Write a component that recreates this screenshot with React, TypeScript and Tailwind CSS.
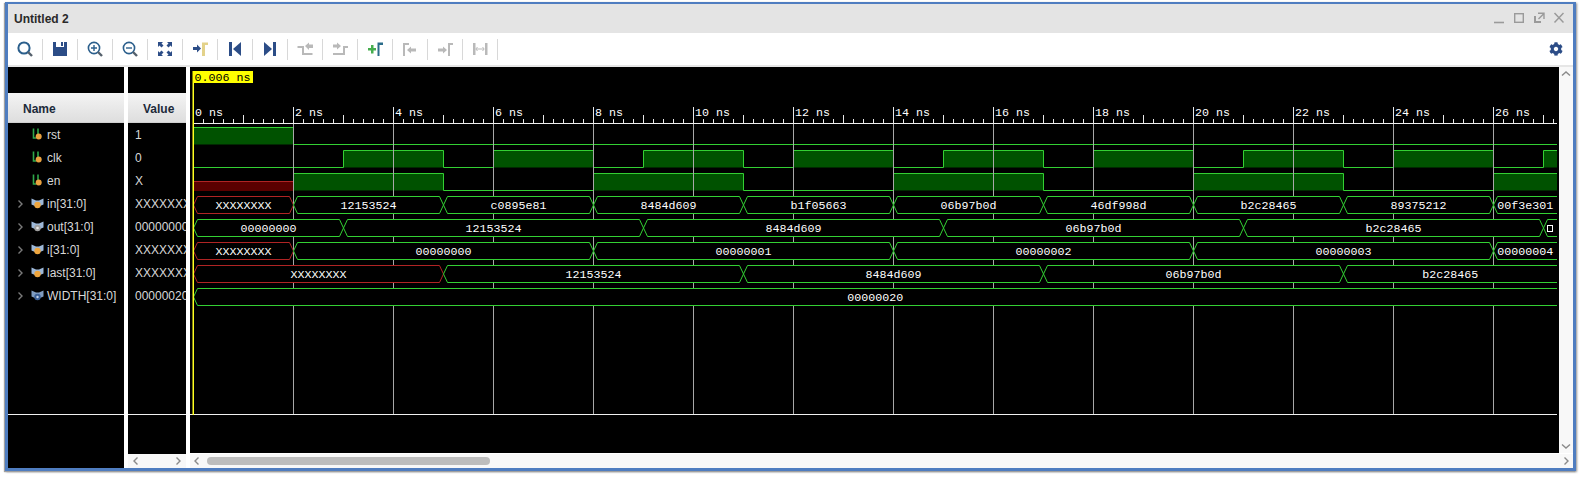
import React from "react";
import { FaCog } from "react-icons/fa";

const X = (t: number) => 193.5 + 50 * t;
const END = 1557;
const GREEN = "#33d033";
const FILL = "#005200";
const RED = "#b02424";
const RFILL = "#5a0000";
const NAVY = "#2c4d87";
const GRAY = "#b9b9b9";
const MONO = { fontFamily: '"Liberation Mono", monospace' };

type Seg = [number, number, string];

const inSegs: Seg[] = [[0, 2, "XXXXXXXX"], [2, 5, "12153524"], [5, 8, "c0895e81"], [8, 11, "8484d609"], [11, 14, "b1f05663"], [14, 17, "06b97b0d"], [17, 20, "46df998d"], [20, 23, "b2c28465"], [23, 26, "89375212"], [26, 99, "00f3e301"]];
const outSegs: Seg[] = [[0, 3, "00000000"], [3, 9, "12153524"], [9, 15, "8484d609"], [15, 21, "06b97b0d"], [21, 27, "b2c28465"], [27, 99, ""]];
const iSegs: Seg[] = [[0, 2, "XXXXXXXX"], [2, 8, "00000000"], [8, 14, "00000001"], [14, 20, "00000002"], [20, 26, "00000003"], [26, 99, "00000004"]];
const lastSegs: Seg[] = [[0, 5, "XXXXXXXX"], [5, 11, "12153524"], [11, 17, "8484d609"], [17, 23, "06b97b0d"], [23, 99, "b2c28465"]];
const widthSegs: Seg[] = [[0, 99, "00000020"]];

function Bus({ top, segs }: { top: number; segs: Seg[] }) {
  const t = top + 0.5;
  const b = top + 17.5;
  const m = top + 9;
  return (
    <g>
      {segs.map(([a, e, label]) => {
        const x0 = X(a);
        const open = X(e) > END;
        const x1 = open ? END : X(e);
        const c = label === "XXXXXXXX" ? RED : GREEN;
        const pts = open
          ? `${END},${t} ${x0 + 4},${t} ${x0},${m} ${x0 + 4},${b} ${END},${b}`
          : `${x0},${m} ${x0 + 4},${t} ${x1 - 4},${t} ${x1},${m} ${x1 - 4},${b} ${x0 + 4},${b} ${x0},${m}`;
        return (
          <g key={a}>
            <polyline points={pts} fill="#000" stroke={c} strokeWidth="1" />
            {label ? (
              <text x={(x0 + x1) / 2} y={m + 4} textAnchor="middle" fill="#fff" fontSize="11.67" style={MONO}>
                {label}
              </text>
            ) : (
              <rect x={1547.5} y={top + 6.5} width="5" height="6" fill="none" stroke="#fff" strokeWidth="1" />
            )}
          </g>
        );
      })}
    </g>
  );
}

function Bit({ top, highs, redUntil }: { top: number; highs: [number, number][]; redUntil?: number }) {
  const hi = top + 0.5;
  const lo = top + 17.5;
  const begin = redUntil ?? 0;
  const pts: string[] = [];
  let level = highs[0][0] === begin ? "hi" : "lo";
  pts.push(`${X(begin)},${level === "hi" ? hi : lo}`);
  highs.forEach(([a, b]) => {
    if (a > begin) pts.push(`${X(a)},${lo}`);
    pts.push(`${X(a)},${hi}`);
    if (X(b) < END) {
      pts.push(`${X(b)},${hi}`, `${X(b)},${lo}`);
      level = "lo";
    } else {
      pts.push(`${END},${hi}`);
      level = "hi";
    }
  });
  if (level === "lo") pts.push(`${END},${lo}`);
  return (
    <g>
      {redUntil ? (
        <>
          <rect x={X(0)} y={top + 8} width={X(redUntil) - X(0)} height={10} fill={RFILL} />
          <line x1={X(0)} x2={X(redUntil)} y1={top + 8.5} y2={top + 8.5} stroke={RED} />
        </>
      ) : null}
      {highs.map(([a, b]) => (
        <rect key={a} x={X(a)} y={hi} width={Math.min(X(b), END) - X(a)} height={17} fill={FILL} />
      ))}
      <polyline points={pts.join(" ")} fill="none" stroke={GREEN} strokeWidth="1" />
    </g>
  );
}

function Waves() {
  const ticks: React.ReactNode[] = [];
  for (let i = 0; i <= 136; i++) {
    const x = 193.5 + i * 10;
    if (x > END) break;
    const major = i % 10 === 0;
    const mid = i % 5 === 0;
    ticks.push(<line key={i} x1={x} x2={x} y1={major ? 107 : mid ? 115 : 119} y2={123} stroke="#e8e8e8" />);
  }
  const labels: React.ReactNode[] = [];
  const grid: React.ReactNode[] = [];
  for (let t = 0; t <= 26; t += 2) {
    labels.push(
      <text key={t} x={X(t) + 1.5} y={116} fill="#fff" fontSize="11.67" style={MONO}>
        {t} ns
      </text>
    );
    if (t > 0) grid.push(<line key={t} x1={X(t)} x2={X(t)} y1={123} y2={414} stroke="#a8a8a8" />);
  }
  const clk: [number, number][] = [3, 6, 9, 12, 15, 18, 21, 24, 27].map((a) => [a, a + 2]);
  const en: [number, number][] = [2, 8, 14, 20, 26].map((a) => [a, a + 3]);
  return (
    <svg viewBox="190 67 1369 386" width="1369" height="386" className="block bg-black">
      <Bit top={127} highs={[[0, 2]]} />
      <Bit top={150} highs={clk} />
      <Bit top={173} highs={en} redUntil={2} />
      {grid}
      {ticks}
      {labels}
      <line x1={193} x2={END} y1={123.5} y2={123.5} stroke="#f0f0f0" />
      <Bus top={196} segs={inSegs} />
      <Bus top={219} segs={outSegs} />
      <Bus top={242} segs={iSegs} />
      <Bus top={265} segs={lastSegs} />
      <Bus top={288} segs={widthSegs} />
      <line x1={190} x2={END} y1={414.5} y2={414.5} stroke="#f0f0f0" />
      <rect x={192.5} y={83} width={1.5} height={332} fill="#ffff20" />
      <rect x={192.5} y={71} width={60.5} height={12} fill="#ffff00" />
      <text x={194.5} y={81} fill="#000" fontSize="11.67" style={MONO}>
        0.006 ns
      </text>
    </svg>
  );
}

function Chevron({ dir, color = "#8a8a8a", size = 10 }: { dir: "l" | "r" | "u" | "d"; color?: string; size?: number }) {
  const d = {
    l: "M6.5 1.5 L3 5 L6.5 8.5",
    r: "M3.5 1.5 L7 5 L3.5 8.5",
    u: "M1 6.5 L5 3 L9 6.5",
    d: "M1 3.5 L5 7 L9 3.5",
  }[dir];
  return (
    <svg width={size} height={size} viewBox="0 0 10 10" className="block shrink-0">
      <path d={d} fill="none" stroke={color} strokeWidth="1.4" />
    </svg>
  );
}

function ScalarIcon() {
  return (
    <svg width="14" height="16" viewBox="0 0 14 16" className="block">
      <path d="M2.5 1.5 V11 H5 M7 1.5 V9" fill="none" stroke="#2fa84a" strokeWidth="1.6" />
      <circle cx="7.7" cy="9.6" r="3" fill="#e9a13f" />
    </svg>
  );
}

function BusIcon({ kind }: { kind: "in" | "out" | "c" }) {
  const dot = kind === "in" ? "#eda53e" : kind === "out" ? "#a0a0a0" : "#3a5f95";
  const wing = kind === "c" ? "#7f9cc0" : "#9db8d8";
  return (
    <svg width="14" height="14" viewBox="0 0 14 14" className="block">
      <path d="M0.5 1.5 L5 3.5 H8 L12.5 1.5 V7.5 L9 9 H4 L0.5 7.5 Z" fill={wing} />
      <circle cx="6.5" cy="8" r={3.2} fill={dot} />
      {kind === "out" ? <circle cx="6.5" cy="8" r={1.3} fill="#e8e8e8" /> : null}
      {kind === "c" ? <circle cx="6.5" cy="8" r={1.2} fill="#c5d4ea" /> : null}
    </svg>
  );
}

const rows: { name: string; value: string; icon: "s" | "in" | "out" | "c" }[] = [
  { name: "rst", value: "1", icon: "s" },
  { name: "clk", value: "0", icon: "s" },
  { name: "en", value: "X", icon: "s" },
  { name: "in[31:0]", value: "XXXXXXXX", icon: "in" },
  { name: "out[31:0]", value: "00000000", icon: "out" },
  { name: "i[31:0]", value: "XXXXXXXX", icon: "in" },
  { name: "last[31:0]", value: "XXXXXXXX", icon: "in" },
  { name: "WIDTH[31:0]", value: "00000020", icon: "c" },
];

const P = ({ d, c, w }: { d: string; c: string; w?: number }) =>
  w ? <path d={d} fill="none" stroke={c} strokeWidth={w} /> : <path d={d} fill={c} />;

const icons: React.ReactNode[] = [
  <>
    <circle cx="9" cy="9" r="5.6" fill="none" stroke="#2b5f8c" strokeWidth="2" />
    <P d="M13 13 L17 17" c="#54606c" w={2.4} />
  </>,
  <P d="M3 3 H6 V8 H14 V3 H17 V17 H3 Z M11 3 H13 V7 H11 Z" c={NAVY} />,
  <>
    <circle cx="9" cy="9" r="5.6" fill="none" stroke="#2b5f8c" strokeWidth="1.6" />
    <P d="M9 6 V12 M6 9 H12" c="#2b5f8c" w={1.4} />
    <P d="M13 13 L17 17" c="#54606c" w={2.4} />
  </>,
  <>
    <circle cx="9" cy="9" r="5.6" fill="none" stroke="#2b5f8c" strokeWidth="1.6" />
    <P d="M6 9 H12" c="#2b5f8c" w={1.4} />
    <P d="M13 13 L17 17" c="#54606c" w={2.4} />
  </>,
  <>
    <P d="M3 3 H8 L6.5 4.5 L8.5 6.5 L6.5 8.5 L4.5 6.5 L3 8 Z" c={NAVY} />
    <P d="M17 3 H12 L13.5 4.5 L11.5 6.5 L13.5 8.5 L15.5 6.5 L17 8 Z" c={NAVY} />
    <P d="M3 17 H8 L6.5 15.5 L8.5 13.5 L6.5 11.5 L4.5 13.5 L3 12 Z" c={NAVY} />
    <P d="M17 17 H12 L13.5 15.5 L11.5 13.5 L13.5 11.5 L15.5 13.5 L17 12 Z" c={NAVY} />
  </>,
  <>
    <P d="M3 8 H7 V5.5 L11 9.5 L7 13.5 V11 H3 Z" c={NAVY} />
    <P d="M12 17 V3.5 H18 V6 H15 V17 Z" c="#e3d28a" />
  </>,
  <>
    <P d="M4 3 H7 V17 H4 Z" c={NAVY} />
    <P d="M16 3 V17 L8 10 Z" c={NAVY} />
  </>,
  <>
    <P d="M4 3 V17 L12 10 Z" c={NAVY} />
    <P d="M13 3 H16 V17 H13 Z" c={NAVY} />
  </>,
  <>
    <P d="M2.5 8 H8 V15 H17.5" c={GRAY} w={2} />
    <P d="M10 7 L14 3.5 V5.5 H18 V9 H14 V11 Z" c={GRAY} />
  </>,
  <>
    <P d="M3 15 H14 V8 H18" c={GRAY} w={2} />
    <P d="M3 5.5 H7 V3.5 L11 7 L7 10.5 V8.5 H3 Z" c={GRAY} />
  </>,
  <>
    <P d="M6 6 H8.5 V9 H11 V11.5 H8.5 V14.5 H6 V11.5 H3 V9 H6 Z" c="#46ad4e" />
    <P d="M12.5 17 V3.5 H18 V6 H14.5 V17 Z" c="#2b6c8a" />
  </>,
  <>
    <P d="M3 17 V4 H9 V6 H5 V17 Z" c={GRAY} />
    <P d="M7 11 L11 7.5 V9.5 H16 V12.5 H11 V14.5 Z" c={GRAY} />
  </>,
  <>
    <P d="M3 9.5 H8 V7.5 L12 11 L8 14.5 V12.5 H3 Z" c={GRAY} />
    <P d="M13 17 V4 H18 V6 H15 V17 Z" c={GRAY} />
  </>,
  <>
    <P d="M3 4 H5.5 V16 H3 Z M15 4 H17.5 V16 H15 Z" c={GRAY} />
    <P d="M6 10 H14 M7.5 8 L5.8 10 L7.5 12 M12.5 8 L14.2 10 L12.5 12" c={GRAY} w={1} />
  </>,
];

export default function App() {
  return (
    <div className="w-[1581px] h-[479px] bg-white pl-[5px] pt-[2px] overflow-hidden" style={{ fontFamily: '"Liberation Sans", Arial, sans-serif' }}>
      <div className="w-[1571px] h-[469px] border-[3px] border-t-2 border-[#4f7dc0] flex flex-col shadow-[-1px_1px_1px_#a0a0a0,1px_1px_2px_#909090]">
        {/* title bar */}
        <div className="h-[29px] shrink-0 bg-[#e4e4e4] flex items-center pl-[6px] pr-[9px]">
          <span className="text-[12px] font-bold text-[#2a2a2a] flex-1">Untitled 2</span>
          <svg width="70" height="14" viewBox="0 0 70 14" className="block">
            <path d="M0 10.5 H10" stroke="#9a9a9a" strokeWidth="1.6" />
            <rect x="20.7" y="1.7" width="8.6" height="8.6" fill="none" stroke="#9a9a9a" strokeWidth="1.4" />
            <path d="M44 1.2 H50 V7 M50 1.5 L44.5 7" fill="none" stroke="#9a9a9a" strokeWidth="1.4" />
            <path d="M40 4 V11 H47 V9 H42 V4 Z" fill="#9a9a9a" />
            <path d="M60.5 1 L69.5 10.5 M69.5 1 L60.5 10.5" stroke="#9a9a9a" strokeWidth="1.5" />
          </svg>
        </div>
        {/* toolbar */}
        <div className="h-[34px] shrink-0 bg-white border-b-2 border-[#e6e6e6] flex items-center">
          {icons.map((ic, i) => (
            <div key={i} className="w-[35px] h-[21px] flex items-center justify-center border-r border-[#d8d8d8]">
              <svg width="20" height="20" viewBox="0 0 20 20" className="block">
                {ic}
              </svg>
            </div>
          ))}
          <div className="flex-1" />
          <FaCog className="mr-[10px] text-[#2c4d87]" size={14} />
        </div>
        {/* body */}
        <div className="flex-1 flex bg-white min-h-0">
          <div className="w-[116px] bg-black flex flex-col">
            <div className="h-[26px]" />
            <div className="h-[30px] pt-[2px] bg-gradient-to-b from-[#f4f4f4] to-[#dedede] flex items-center pl-[15px] text-[12px] font-bold text-[#1c2a3a] border-b border-[#cfcfcf]">
              Name
            </div>
            <div className="h-[291px]">
              {rows.map((r) => (
                <div key={r.name} className="h-[23px] flex items-center text-[12px] text-[#d8d8d8] whitespace-nowrap">
                  <span className="w-[17px] flex justify-end shrink-0">
                    {r.icon !== "s" ? <Chevron dir="r" color="#7a7a7a" /> : null}
                  </span>
                  <span className="w-[22px] shrink-0 pl-[6px]">
                    {r.icon === "s" ? <ScalarIcon /> : <BusIcon kind={r.icon} />}
                  </span>
                  <span>{r.name}</span>
                </div>
              ))}
            </div>
            <div className="h-px bg-[#f0f0f0]" />
          </div>
          <div className="w-[4px]" />
          <div className="w-[58px] flex flex-col bg-black">
            <div className="h-[26px]" />
            <div className="h-[30px] pt-[2px] bg-gradient-to-b from-[#f4f4f4] to-[#dedede] flex items-center pl-[15px] text-[12px] font-bold text-[#1c2a3a] border-b border-[#cfcfcf]">
              Value
            </div>
            <div className="h-[291px] overflow-hidden">
              {rows.map((r) => (
                <div key={r.name} className="h-[23px] flex items-center pl-[7px] text-[12px] text-[#d8d8d8] whitespace-nowrap">
                  {r.value}
                </div>
              ))}
            </div>
            <div className="h-px bg-[#f0f0f0]" />
            <div className="flex-1" />
            <div className="h-[14px] bg-[#f8f8f8] flex items-center justify-between px-[3px] mt-px">
              <Chevron dir="l" />
              <Chevron dir="r" />
            </div>
          </div>
          <div className="w-[4px]" />
          <div className="flex-1 flex flex-col">
            <div className="flex">
              <Waves />
              <div className="flex-1 bg-[#f8f8f8] flex flex-col items-center justify-between pt-[2px] pb-[2px]">
                <Chevron dir="u" />
                <Chevron dir="d" />
              </div>
            </div>
            <div className="mt-px flex-1 bg-[#f8f8f8] flex items-center pl-[2px] pr-[2px]">
              <Chevron dir="l" />
              <div className="ml-[5px] w-[283px] h-[8px] rounded-full bg-[#bdbdbd]" />
              <div className="flex-1" />
              <Chevron dir="r" />
            </div>
          </div>
        </div>
      </div>
    </div>
  );
}
